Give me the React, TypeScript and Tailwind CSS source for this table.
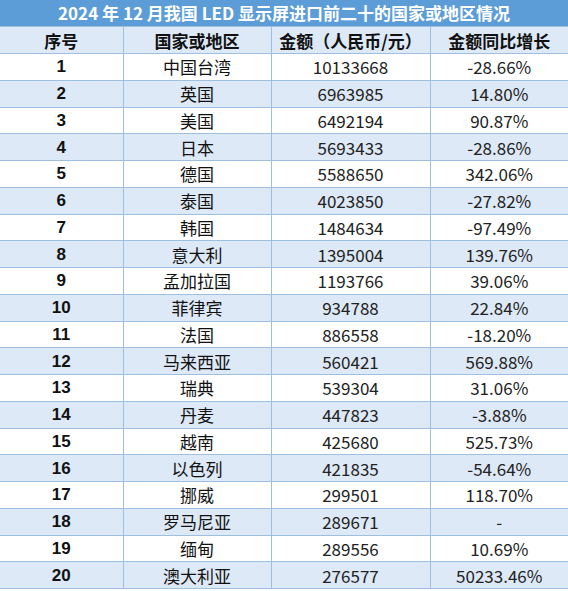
const rows: [number, string, string, string][] = [
  [1, "中国台湾", "10133668", "-28.66%"],
  [2, "英国", "6963985", "14.80%"],
  [3, "美国", "6492194", "90.87%"],
  [4, "日本", "5693433", "-28.86%"],
  [5, "德国", "5588650", "342.06%"],
  [6, "泰国", "4023850", "-27.82%"],
  [7, "韩国", "1484634", "-97.49%"],
  [8, "意大利", "1395004", "139.76%"],
  [9, "孟加拉国", "1193766", "39.06%"],
  [10, "菲律宾", "934788", "22.84%"],
  [11, "法国", "886558", "-18.20%"],
  [12, "马来西亚", "560421", "569.88%"],
  [13, "瑞典", "539304", "31.06%"],
  [14, "丹麦", "447823", "-3.88%"],
  [15, "越南", "425680", "525.73%"],
  [16, "以色列", "421835", "-54.64%"],
  [17, "挪威", "299501", "118.70%"],
  [18, "罗马尼亚", "289671", "-"],
  [19, "缅甸", "289556", "10.69%"],
  [20, "澳大利亚", "276577", "50233.46%"],
];

export default function App() {
  return (
    <div
      className="w-[568px] bg-white text-[#111]"
      style={{ fontFamily: '"Noto Sans CJK SC", "Noto Sans", sans-serif' }}
    >
      {/* 标题 */}
      <div className="h-[26px] bg-[#5c9dd8] text-white font-bold text-[17px] flex items-center justify-center">
        2024 年 12 月我国 LED 显示屏进口前二十的国家或地区情况
      </div>

      <table className="w-full table-fixed border-collapse text-[17px]">
        <colgroup>
          <col className="w-[123px]" />
          <col className="w-[148px]" />
          <col className="w-[159px]" />
          <col className="w-[138px]" />
        </colgroup>
        <thead>
          <tr className="h-[27px] bg-[#dde9f6] font-bold">
            <th className="border border-[#9fbfdf] border-l-0 font-bold p-0 leading-none">序号</th>
            <th className="border border-[#9fbfdf] font-bold p-0 leading-none">国家或地区</th>
            <th className="border border-[#9fbfdf] font-bold p-0 leading-none">金额（人民币/元）</th>
            <th className="border border-[#9fbfdf] border-r-0 font-bold p-0 leading-none">金额同比增长</th>
          </tr>
        </thead>
        <tbody>
          {rows.map(([no, name, amount, rate]) => (
            <tr
              key={no}
              className={"h-[26.75px] " + (no % 2 === 0 ? "bg-[#dde9f6]" : "bg-white")}
            >
              <td
                className="border border-[#9fbfdf] border-l-0 p-0 text-center font-bold leading-none"
                style={{ fontFamily: '"Liberation Sans", Arial, sans-serif' }}
              >
                {no}
              </td>
              <td className="border border-[#9fbfdf] p-0 text-center leading-none">{name}</td>
              <td className="border border-[#9fbfdf] p-0 text-center leading-none text-[#222]">{amount}</td>
              <td className="border border-[#9fbfdf] border-r-0 p-0 text-center leading-none text-[#222]">{rate}</td>
            </tr>
          ))}
        </tbody>
      </table>
    </div>
  );
}
